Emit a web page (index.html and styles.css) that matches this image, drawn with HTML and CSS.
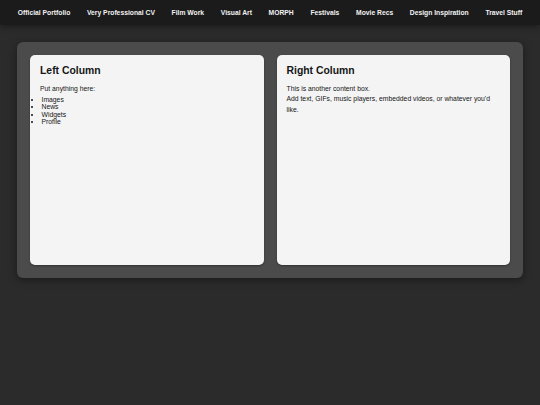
FILE: index.html
```html
<!DOCTYPE html>
<html lang="en">
  <head>
    <meta charset="UTF-8" />
    <meta name="viewport" content="width=device-width, initial-scale=1.0" />
    <title>My Corner of the Web</title>
    <link rel="stylesheet" href="styles.css">
  </head>
  <body>
    <nav class="topnav">
      <a href="#">Official Portfolio</a>
      <a href="#">Very Professional CV</a>
      <a href="#">Film Work</a>
      <a href="#">Visual Art</a>
      <a href="#">MORPH</a>
      <a href="#">Festivals</a>
      <a href="#">Movie Recs</a>
      <a href="#">Design Inspiration</a>
      <a href="#">Travel Stuff</a>
    </nav>

    <main class="page">
      <div class="columns">
        <section class="box">
          <h2>Left Column</h2>
          <p>Put anything here:</p>
          <ul>
            <li>Images</li>
            <li>News</li>
            <li>Widgets</li>
            <li>Profile</li>
          </ul>
        </section>

        <section class="box">
          <h2>Right Column</h2>
          <p>This is another content box.</p>
          <p>Add text, GIFs, music players, embedded videos, or whatever you'd like.</p>
        </section>
      </div>
    </main>
  </body>
</html>
```

FILE: styles.css
```css
body {
  margin: 0;
  font-family: "Liberation Sans", Arial, sans-serif;
  background: #2b2b2b;
  color: #151515;
}
.topnav {
  height: 25px;
  display: flex;
  align-items: center;
  justify-content: center;
  gap: 16.7px;
  background: #1b1b1b;
  box-shadow: 0 2px 6px rgba(0, 0, 0, 0.35);
}
.topnav a {
  color: #f2f2f2;
  text-decoration: none;
  font-weight: bold;
  font-size: 6.75px;
}
.page {
  padding: 17px;
}
.columns {
  display: grid;
  grid-template-columns: 1fr 1fr;
  gap: 13px;
  padding: 13px;
  background: #4b4b4b;
  border-radius: 6px;
  box-shadow: 0 2px 8px rgba(0, 0, 0, 0.4);
}
.box {
  height: 210px;
  box-sizing: border-box;
  padding: 10px;
  background: #f4f4f4;
  border-radius: 5px;
  box-shadow: 0 1px 2px rgba(0, 0, 0, 0.35);
}
.box h2 {
  margin: 0 0 7.5px;
  font-size: 10.4px;
}
.box p {
  margin: 0;
  font-size: 6.8px;
  line-height: 1.6;
}
.box ul {
  margin: 1.5px 0 0;
  padding-left: 1.5px;
  font-size: 6.8px;
  line-height: 1.1;
}
```
